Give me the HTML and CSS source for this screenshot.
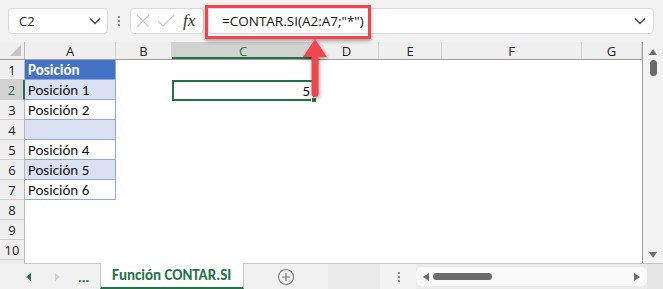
FILE: index.html
```html
<!DOCTYPE html>
<html lang="es">
<head>
    <meta charset="UTF-8">
    <title>CONTAR.SI</title>
    <link rel="stylesheet" href="styles.css">
</head>
<body>
    <div class="app">
        <div class="toolbar">
            <div class="namebox">
                <span>C2</span>
                <svg class="chev" width="12" height="8" viewBox="0 0 12 8"><path d="M1 1.5 L6 6.5 L11 1.5" fill="none" stroke="#444" stroke-width="1.3"/></svg>
            </div>
            <div class="vdots"><i></i><i></i><i></i></div>
            <div class="fxbox">
                <svg width="16" height="16" viewBox="0 0 16 16"><path d="M2 2 L14 14 M14 2 L2 14" stroke="#c8c8c8" stroke-width="1.2"/></svg>
                <svg width="18" height="16" viewBox="0 0 18 16"><path d="M1 8 L6 13 L17 2" fill="none" stroke="#c8c8c8" stroke-width="1.2"/></svg>
                <span class="fx">fx</span>
            </div>
            <div class="formula">
                <span>=CONTAR.SI(A2:A7;"*")</span>
                <svg class="chev" width="12" height="8" viewBox="0 0 12 8"><path d="M1 1.5 L6 6.5 L11 1.5" fill="none" stroke="#444" stroke-width="1.3"/></svg>
            </div>
        </div>

        <div class="sheet">
            <div class="grid">
                <div class="row head">
                    <div class="rh corner"></div>
                    <div class="c ca">A</div>
                    <div class="c cb">B</div>
                    <div class="c cc active">C</div>
                    <div class="c cd">D</div>
                    <div class="c ce">E</div>
                    <div class="c cf">F</div>
                    <div class="c cg">G</div>
                </div>
                <div class="row">
                    <div class="rh">1</div>
                    <div class="c ca t th">Posición</div>
                    <div class="c cb"></div><div class="c cc"></div><div class="c cd"></div><div class="c ce"></div><div class="c cf"></div><div class="c cg"></div>
                </div>
                <div class="row">
                    <div class="rh active">2</div>
                    <div class="c ca t band">Posición 1</div>
                    <div class="c cb"></div>
                    <div class="c cc sel">5<span class="handle"></span></div>
                    <div class="c cd"></div><div class="c ce"></div><div class="c cf"></div><div class="c cg"></div>
                </div>
                <div class="row">
                    <div class="rh">3</div>
                    <div class="c ca t">Posición 2</div>
                    <div class="c cb"></div><div class="c cc"></div><div class="c cd"></div><div class="c ce"></div><div class="c cf"></div><div class="c cg"></div>
                </div>
                <div class="row">
                    <div class="rh">4</div>
                    <div class="c ca t band"></div>
                    <div class="c cb"></div><div class="c cc"></div><div class="c cd"></div><div class="c ce"></div><div class="c cf"></div><div class="c cg"></div>
                </div>
                <div class="row">
                    <div class="rh">5</div>
                    <div class="c ca t">Posición 4</div>
                    <div class="c cb"></div><div class="c cc"></div><div class="c cd"></div><div class="c ce"></div><div class="c cf"></div><div class="c cg"></div>
                </div>
                <div class="row">
                    <div class="rh">6</div>
                    <div class="c ca t band">Posición 5</div>
                    <div class="c cb"></div><div class="c cc"></div><div class="c cd"></div><div class="c ce"></div><div class="c cf"></div><div class="c cg"></div>
                </div>
                <div class="row">
                    <div class="rh">7</div>
                    <div class="c ca t">Posición 6</div>
                    <div class="c cb"></div><div class="c cc"></div><div class="c cd"></div><div class="c ce"></div><div class="c cf"></div><div class="c cg"></div>
                </div>
                <div class="row">
                    <div class="rh">8</div>
                    <div class="c ca"></div><div class="c cb"></div><div class="c cc"></div><div class="c cd"></div><div class="c ce"></div><div class="c cf"></div><div class="c cg"></div>
                </div>
                <div class="row">
                    <div class="rh">9</div>
                    <div class="c ca"></div><div class="c cb"></div><div class="c cc"></div><div class="c cd"></div><div class="c ce"></div><div class="c cf"></div><div class="c cg"></div>
                </div>
                <div class="row">
                    <div class="rh">10</div>
                    <div class="c ca"></div><div class="c cb"></div><div class="c cc"></div><div class="c cd"></div><div class="c ce"></div><div class="c cf"></div><div class="c cg"></div>
                </div>
                <div class="row">
                    <div class="rh"></div>
                </div>
            </div>
            <div class="vscroll">
                <svg width="10" height="8" viewBox="0 0 10 8"><path d="M1 7 L5 1 L9 7 Z" fill="#6b6b6b"/></svg>
                <div class="vthumb"></div>
                <div class="spacer"></div>
                <svg width="10" height="8" viewBox="0 0 10 8"><path d="M1 1 L5 7 L9 1 Z" fill="#6b6b6b"/></svg>
            </div>
        </div>

        <div class="tabs">
            <div class="nav">
                <svg width="6" height="8" viewBox="0 0 6 8"><path d="M5 0 L0 4 L5 8 Z" fill="#217346"/></svg>
                <svg width="6" height="8" viewBox="0 0 6 8"><path d="M1 0 L6 4 L1 8 Z" fill="#d0d0d0"/></svg>
                <span class="more">...</span>
            </div>
            <div class="tab">Función CONTAR.SI</div>
            <div class="addsheet">
                <svg width="18" height="18" viewBox="0 0 18 18"><circle cx="9" cy="9" r="7.5" fill="none" stroke="#7a7a7a" stroke-width="1.1"/><path d="M9 5 V13 M5 9 H13" stroke="#7a7a7a" stroke-width="1.2"/></svg>
            </div>
            <div class="hdots"><i></i><i></i><i></i></div>
            <div class="hscroll">
                <svg width="8" height="10" viewBox="0 0 8 10"><path d="M7 1 L1 5 L7 9 Z" fill="#6b6b6b"/></svg>
                <div class="hthumb"></div>
                <div class="spacer"></div>
                <svg width="8" height="10" viewBox="0 0 8 10"><path d="M1 1 L7 5 L1 9 Z" fill="#6b6b6b"/></svg>
            </div>
            <div class="tabend"></div>
        </div>

        <!-- annotation -->
        <div class="callout"></div>
        <svg class="arrow" width="36" height="66" viewBox="0 0 36 66">
            <path d="M18 3 L30 21 L21.5 21 L21.5 58 Q21.5 61 18 61 Q14.5 61 14.5 58 L14.5 21 L6 21 Z" fill="#f0464f"/>
        </svg>
    </div>
</body>
</html>
```

FILE: styles.css
```css
* {
    box-sizing: border-box;
}

body {
    margin: 0;
    background: #fff;
}

.app {
    position: relative;
    width: 663px;
    height: 289px;
    overflow: hidden;
    font-family: "Open Sans", "Noto Sans", sans-serif;
    color: #222;
}

/* formula bar */
.toolbar {
    display: flex;
    align-items: center;
    height: 42px;
    padding: 0 9px 0 8px;
    background: #f3f3f3;
}

.namebox {
    display: flex;
    align-items: center;
    justify-content: space-between;
    width: 100px;
    height: 26px;
    padding: 0 6px 0 10px;
    background: #fff;
    border: 1px solid #dadada;
    border-radius: 4px;
    font-size: 13px;
}

.vdots {
    display: flex;
    flex-direction: column;
    gap: 2px;
    width: 22px;
    align-items: center;
}

.vdots i,
.hdots i {
    display: block;
    width: 2px;
    height: 2px;
    background: #8a8a8a;
}

.fxbox {
    display: flex;
    align-items: center;
    gap: 6px;
    width: 74px;
    height: 26px;
    padding: 0 5px 0 4px;
    background: #fff;
    border: 1px solid #dadada;
    border-radius: 4px;
}

.fx {
    font-family: "Liberation Serif", serif;
    font-style: italic;
    font-size: 17px;
    color: #333;
    margin-left: 2px;
}

.formula {
    flex: 1;
    display: flex;
    align-items: center;
    justify-content: space-between;
    height: 26px;
    margin-left: 4px;
    padding: 0 7px 0 13px;
    background: #fff;
    border: 1px solid #dadada;
    border-radius: 4px;
    font-size: 13.5px;
    color: #111;
}

/* sheet grid */
.sheet {
    display: flex;
    height: 221px;
}

.grid {
    width: 643px;
    border-right: 1px solid #9f9f9f;
}

.row {
    display: flex;
    height: 20px;
}

.row.head {
    height: 18px;
    background: #efefef;
    border-bottom: 1px solid #9f9f9f;
}

.rh {
    width: 25px;
    flex: none;
    background: #efefef;
    border-right: 1px solid #b8b8b8;
    border-bottom: 1px solid #cfcfcf;
    font-size: 13px;
    text-align: center;
    line-height: 21px;
}

.rh.active {
    background: #d2d2d2;
    color: #217346;
    border-right: 2px solid #217346;
}

.rh.corner {
    position: relative;
    border-bottom: none;
}

.rh.corner::after {
    content: "";
    position: absolute;
    right: 3px;
    bottom: 3px;
    border-style: solid;
    border-width: 0 0 11px 11px;
    border-color: transparent transparent #c4c4c4 transparent;
}

.c {
    flex: none;
    height: 100%;
}

.head .c {
    font-size: 13px;
    text-align: center;
    line-height: 19px;
    border-right: 1px solid #d2d2d2;
    color: #222;
}

.head .c.active {
    background: #d2d2d2;
    color: #217346;
    border-bottom: 2px solid #217346;
}

.ca { width: 91px; }
.cb { width: 56px; }
.cc { width: 143px; }
.cd { width: 64px; }
.ce { width: 63px; }
.cf { width: 140px; }
.cg { width: 60px; }

.t {
    border-right: 1px solid #8ea9db;
    border-bottom: 1px solid #8ea9db;
    padding-left: 3px;
    font-family: "Carlito", "Lato", sans-serif;
    font-size: 15px;
    line-height: 21px;
    color: #111;
}

.t.band {
    background: #d9e1f2;
}

.t.th {
    background: #4472c4;
    color: #fff;
    font-weight: bold;
}

.sel {
    position: relative;
    border: 2px solid #217346;
    text-align: right;
    padding-right: 3px;
    font-family: "Carlito", "Lato", sans-serif;
    font-size: 15px;
    line-height: 18px;
    height: 21px;
    color: #111;
}

.handle {
    position: absolute;
    right: -4px;
    bottom: -4px;
    width: 6px;
    height: 6px;
    background: #217346;
    border: 1px solid #fff;
}

.vscroll {
    display: flex;
    flex-direction: column;
    align-items: center;
    width: 20px;
    padding: 6px 0 4px;
    background: #f3f3f3;
}

.vthumb {
    width: 7px;
    height: 16px;
    margin-top: 4px;
    border-radius: 4px;
    background: #6b6b6b;
}

.spacer {
    flex: 1;
}

/* sheet tabs */
.tabs {
    display: flex;
    align-items: stretch;
    height: 26px;
    background: #ececec;
    border-top: 1px solid #c6c6c6;
}

.nav {
    display: flex;
    align-items: center;
    width: 100px;
    padding-left: 26px;
    gap: 22px;
    background: #f0f0f0;
}

.more {
    font-weight: bold;
    font-size: 13px;
    color: #217346;
    margin-left: -4px;
}

.tab {
    width: 144px;
    margin-top: -1px;
    padding-left: 11px;
    background: #fff;
    border-left: 1px solid #c6c6c6;
    border-right: 1px solid #c6c6c6;
    border-bottom: 2px solid #217346;
    font-family: "Carlito", "Lato", sans-serif;
    font-weight: bold;
    font-size: 15px;
    line-height: 25px;
    color: #217346;
}

.addsheet {
    display: flex;
    align-items: center;
    justify-content: center;
    width: 84px;
    background: #f0f0f0;
}

.hdots {
    display: flex;
    flex-direction: column;
    justify-content: center;
    align-items: center;
    gap: 2px;
    width: 88px;
    padding-left: 54px;
    background: linear-gradient(to right, #ebebeb 0 52px, #f3f3f3 52px);
}

.hscroll {
    display: flex;
    align-items: center;
    width: 231px;
    margin: 3px 0;
    padding: 0 6px 0 6px;
    background: #fafafa;
    border-radius: 6px;
}

.hthumb {
    width: 59px;
    height: 7px;
    margin-left: 3px;
    border-radius: 4px;
    background: #6b6b6b;
}

.tabend {
    flex: 1;
    background: #e6e6e6;
}

/* annotation over the formula bar */
.callout {
    position: absolute;
    left: 205px;
    top: 5px;
    width: 166px;
    height: 34px;
    border: 3px solid #ee4550;
    box-shadow: 0 2px 4px rgba(0, 0, 0, 0.35);
}

.arrow {
    position: absolute;
    left: 297px;
    top: 36px;
    filter: drop-shadow(1px 2px 2px rgba(0, 0, 0, 0.35));
}
```
